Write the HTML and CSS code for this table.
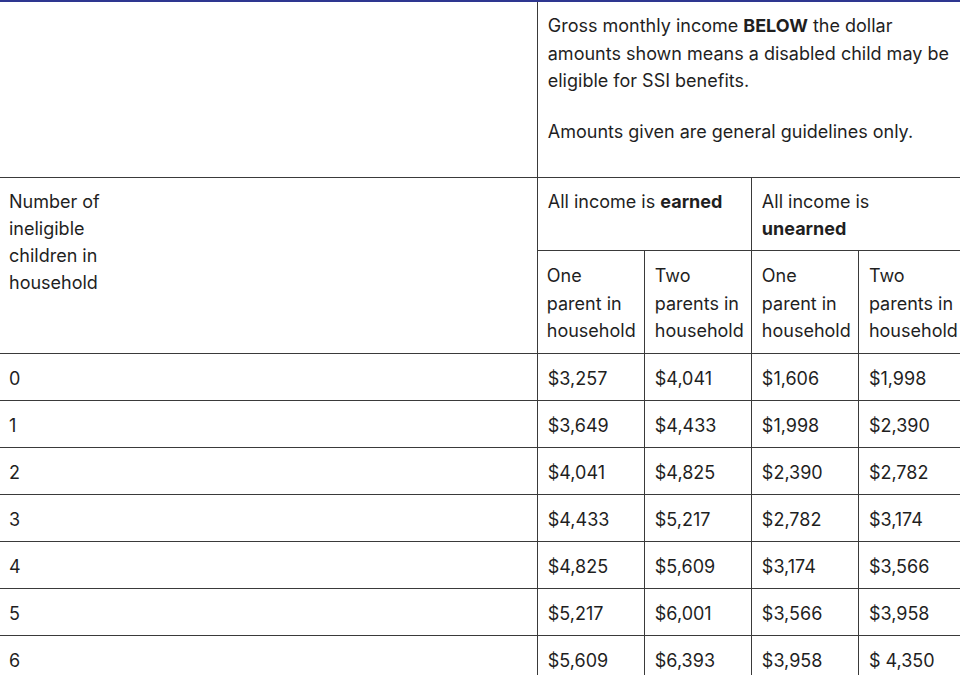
FILE: index.html
```html
<!DOCTYPE html>
<html lang="en">
<head>
<meta charset="utf-8">
<title>SSI income guidelines</title>
<link rel="stylesheet" href="styles.css">
</head>
<body>
<table class="ssi">
  <colgroup>
    <col class="c-label">
    <col class="c-num">
    <col class="c-num">
    <col class="c-num">
    <col class="c-num">
  </colgroup>
  <tr class="intro">
    <td class="blank"></td>
    <td colspan="4" class="note">
      <p>Gross monthly income <b>BELOW</b> the dollar amounts shown means a disabled child may be eligible for SSI benefits.</p>
      <p>Amounts given are general guidelines only.</p>
    </td>
  </tr>
  <tr class="head head-top">
    <td rowspan="2" class="label"><span class="label-text">Number of ineligible children in household</span></td>
    <td colspan="2">All income is <b>earned</b></td>
    <td colspan="2">All income is<br><b>unearned</b></td>
  </tr>
  <tr class="head head-sub">
    <td>One parent in household</td>
    <td>Two parents in household</td>
    <td>One parent in household</td>
    <td>Two parents in household</td>
  </tr>
  <tr class="data"><td>0</td><td>$3,257</td><td>$4,041</td><td>$1,606</td><td>$1,998</td></tr>
  <tr class="data"><td>1</td><td>$3,649</td><td>$4,433</td><td>$1,998</td><td>$2,390</td></tr>
  <tr class="data"><td>2</td><td>$4,041</td><td>$4,825</td><td>$2,390</td><td>$2,782</td></tr>
  <tr class="data"><td>3</td><td>$4,433</td><td>$5,217</td><td>$2,782</td><td>$3,174</td></tr>
  <tr class="data"><td>4</td><td>$4,825</td><td>$5,609</td><td>$3,174</td><td>$3,566</td></tr>
  <tr class="data"><td>5</td><td>$5,217</td><td>$6,001</td><td>$3,566</td><td>$3,958</td></tr>
  <tr class="data"><td>6</td><td>$5,609</td><td>$6,393</td><td>$3,958</td><td>$ 4,350</td></tr>
</table>
</body>
</html>
```
FILE: styles.css
```css
html, body {
  margin: 0;
  padding: 0;
  background: #ffffff;
  overflow: hidden;
}
body {
  width: 960px;
  height: 675px;
  font-family: Inter, "Noto Sans", "Liberation Sans", sans-serif;
  font-size: 18px;
  color: #1f1f1f;
}
.ssi {
  border-collapse: collapse;
  table-layout: fixed;
  width: 966px;
  border-top: 2px solid #2e3690;
}
.c-label { width: 537px; }
.c-num { width: 107px; }
.ssi td {
  border: 1px solid #3a3a3a;
  padding: 10px 10px;
  vertical-align: top;
  text-align: left;
  line-height: 27.5px;
}
.ssi tr td:first-child {
  border-left: none;
  padding-left: 9px;
}
.ssi tr.intro td { border-top: none; }
.ssi td.note {
  padding: 10px 14px 10px 10px;
}
.note p { margin: 0 0 23px; }
.note p:last-child { margin-bottom: 22px; }
.note b, .head b { font-weight: 700; }
.head-top td {
  line-height: 27px;
  padding-top: 10px;
  padding-bottom: 8px;
}
.head-sub td {
  padding-top: 11px;
  padding-bottom: 8px;
}
.label-text { display: block; width: 100px; }
.ssi .data td {
  line-height: 26px;
  padding-top: 12px;
  padding-bottom: 8px;
}
```
